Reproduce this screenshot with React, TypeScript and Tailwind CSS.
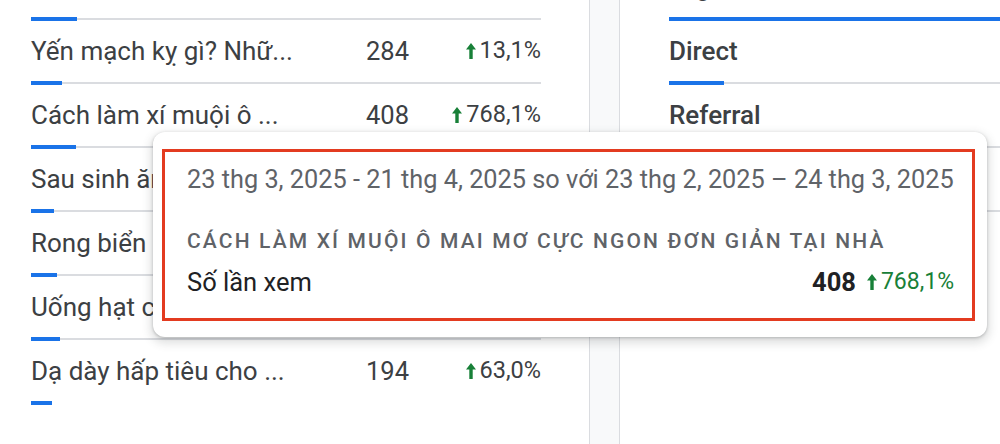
import React from "react";

type Row = { title: string; views: number; change: string; bar: number };

const pageRows: Row[] = [
  { title: "Yến mạch kỵ gì? Nhữ...", views: 284, change: "13,1%", bar: 31 },
  { title: "Cách làm xí muội ô ...", views: 408, change: "768,1%", bar: 45 },
  { title: "Sau sinh ăn rau ...", views: 231, change: "41,7%", bar: 23 },
  { title: "Rong biển làm ...", views: 226, change: "22,2%", bar: 26 },
  { title: "Uống hạt chia ...", views: 215, change: "18,9%", bar: 29 },
  { title: "Dạ dày hấp tiêu cho ...", views: 194, change: "63,0%", bar: 21 },
];

const channels = [
  { name: "Organic Search", bar: 999 },
  { name: "Direct", bar: 55 },
  { name: "Referral", bar: 22 },
  { name: "Organic Social", bar: 14 },
  { name: "Unassigned", bar: 8 },
];

function UpArrow({ className = "" }: { className?: string }) {
  return (
    <svg viewBox="0 0 10 16" className={className} fill="#188038">
      <path d="M5 0 10 6.4H6.7V16H3.3V6.4H0Z" />
    </svg>
  );
}

// blue share bar sitting on the grey row divider (last row has no divider)
function Bar({ width, last = false }: { width: number; last?: boolean }) {
  return (
    <div className="flex h-1 items-center">
      <div className="h-1 shrink-0 bg-[#1a73e8]" style={{ width }} />
      {!last && <div className="h-[2px] flex-1 bg-[#dadce0]" />}
    </div>
  );
}

export default function App() {
  return (
    <div className="relative h-[444px] w-[1000px] overflow-hidden bg-white font-['Roboto',sans-serif]">
      <div className="flex h-full">
        {/* pages card */}
        <div className="w-[590px] shrink-0 border-r border-[#dadce0] bg-white pr-[48px] pl-[31px] pt-[17px]">
          <Bar width={46} />
          {pageRows.map((r, i) => (
            <div key={r.title}>
              <div className="flex h-[60px] items-center text-[#3c4043]">
                <div className="flex-1 text-[26px] whitespace-nowrap">{r.title}</div>
                <div className="w-[80px] text-right text-[25.5px]">{r.views}</div>
                <div className="flex w-[132px] items-center justify-end gap-[4px] text-[23.5px]">
                  <UpArrow className="h-[16px] w-[10px]" />
                  <span>{r.change}</span>
                </div>
              </div>
              <Bar width={r.bar} last={i === pageRows.length - 1} />
            </div>
          ))}
        </div>

        <div className="w-[29px] shrink-0 bg-[#f8f9fa]" />

        {/* channels card */}
        <div className="min-w-0 flex-1 border-l border-[#dadce0] pl-[49px]">
          <div className="-mt-[43px] w-[600px]">
            {channels.map((c, i) => (
              <div key={c.name}>
                <div className="flex h-[60px] items-center text-[26px] font-medium text-[#3c4043]">
                  {c.name}
                </div>
                <Bar width={c.bar} last={i === channels.length - 1} />
              </div>
            ))}
          </div>
        </div>
      </div>

      {/* hover tooltip */}
      <div className="absolute top-[132px] left-[153px] h-[205px] w-[834px] rounded-[12px] bg-white pt-[17px] pl-[9px] shadow-[0_1px_3px_rgba(60,64,67,0.3),0_4px_8px_3px_rgba(60,64,67,0.15)]">
        <div className="flex h-[172px] w-[813px] flex-col border-[3px] border-[#e33b20] pt-[13px] pr-[18px] pl-[22px]">
          <div className="h-[30px] text-[25.3px] leading-[30px] whitespace-nowrap text-[#5f6368]">
            23 thg 3, 2025 - 21 thg 4, 2025 so với 23 thg 2, 2025 – 24 thg 3, 2025
          </div>
          <div className="mt-[33px] h-[26px] text-[21px] leading-[26px] font-medium tracking-[2.15px] whitespace-nowrap text-[#5f6368] uppercase">
            Cách làm xí muội ô mai mơ cực ngon đơn giản tại nhà
          </div>
          <div className="mt-[13px] flex h-[30px] items-center leading-[30px]">
            <span className="flex-1 text-[25.5px] text-[#202124]">Số lần xem</span>
            <span className="text-[25.5px] font-bold text-[#202124]">408</span>
            <UpArrow className="ml-[11px] h-[16px] w-[10px]" />
            <span className="ml-[4px] text-[23px] text-[#188038]">768,1%</span>
          </div>
        </div>
      </div>
    </div>
  );
}
